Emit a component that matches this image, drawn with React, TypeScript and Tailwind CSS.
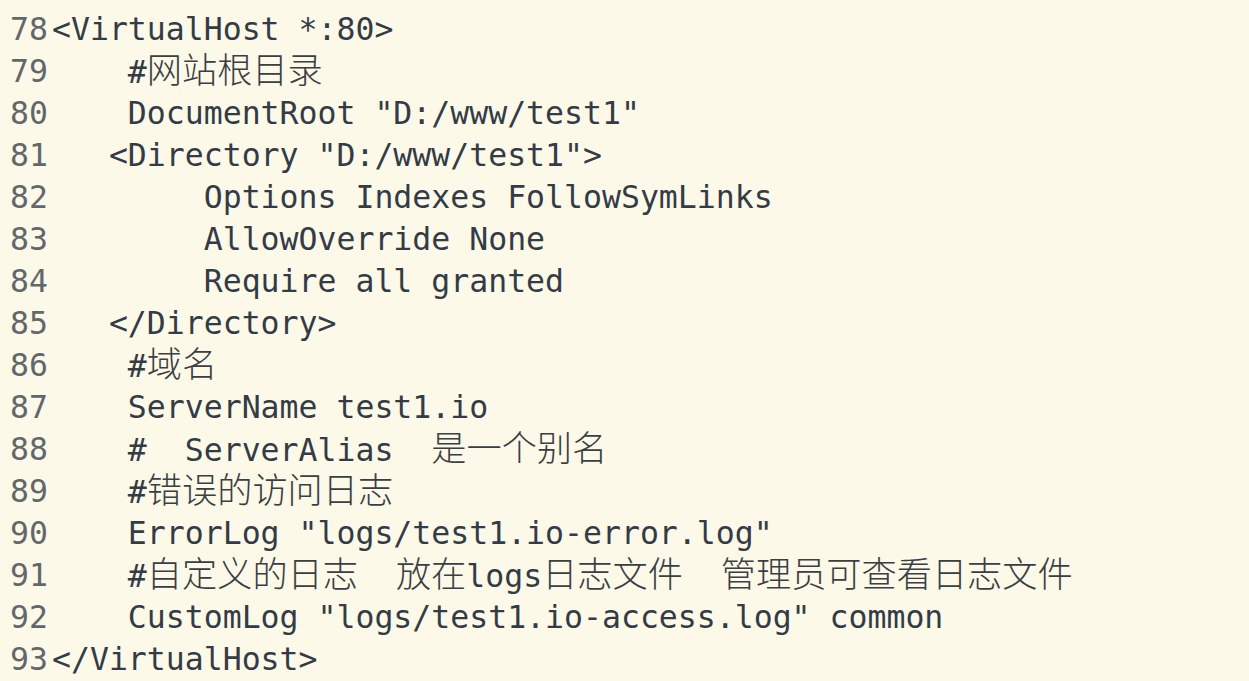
import React from "react";

const lines: [string, string][] = [
  ["78", "<VirtualHost *:80>"],
  ["79", "    #网站根目录"],
  ["80", "    DocumentRoot \"D:/www/test1\""],
  ["81", "   <Directory \"D:/www/test1\">"],
  ["82", "        Options Indexes FollowSymLinks"],
  ["83", "        AllowOverride None"],
  ["84", "        Require all granted"],
  ["85", "   </Directory>"],
  ["86", "    #域名"],
  ["87", "    ServerName test1.io"],
  ["88", "    #  ServerAlias  是一个别名"],
  ["89", "    #错误的访问日志"],
  ["90", "    ErrorLog \"logs/test1.io-error.log\""],
  ["91", "    #自定义的日志  放在logs日志文件  管理员可查看日志文件"],
  ["92", "    CustomLog \"logs/test1.io-access.log\" common"],
  ["93", "</VirtualHost>"],
];

function renderText(t: string) {
  const parts = t.split(/([\u4e00-\u9fff]+)/);
  return parts.map((p, i) =>
    /[\u4e00-\u9fff]/.test(p) ? (
      <span
        key={i}
        className="text-[35.2px] leading-none text-[#3a3f44] font-['Noto_Sans_CJK_SC',sans-serif] font-light"
      >
        {p}
      </span>
    ) : (
      <span key={i}>{p}</span>
    )
  );
}

export default function App() {
  return (
    <div className="w-[1249px] h-[681px] overflow-hidden bg-[#fdf9e8] pt-[8px] pl-[10px] font-['DejaVu_Sans_Mono',monospace] text-[31.5px] text-[#333c46]">
      {lines.map(([n, t]) => (
        <div key={n} className="flex h-[42px] leading-[42px] whitespace-pre">
          <span className="w-[42px] shrink-0 text-[#62676b]">{n}</span>
          <span>{renderText(t)}</span>
        </div>
      ))}
    </div>
  );
}
